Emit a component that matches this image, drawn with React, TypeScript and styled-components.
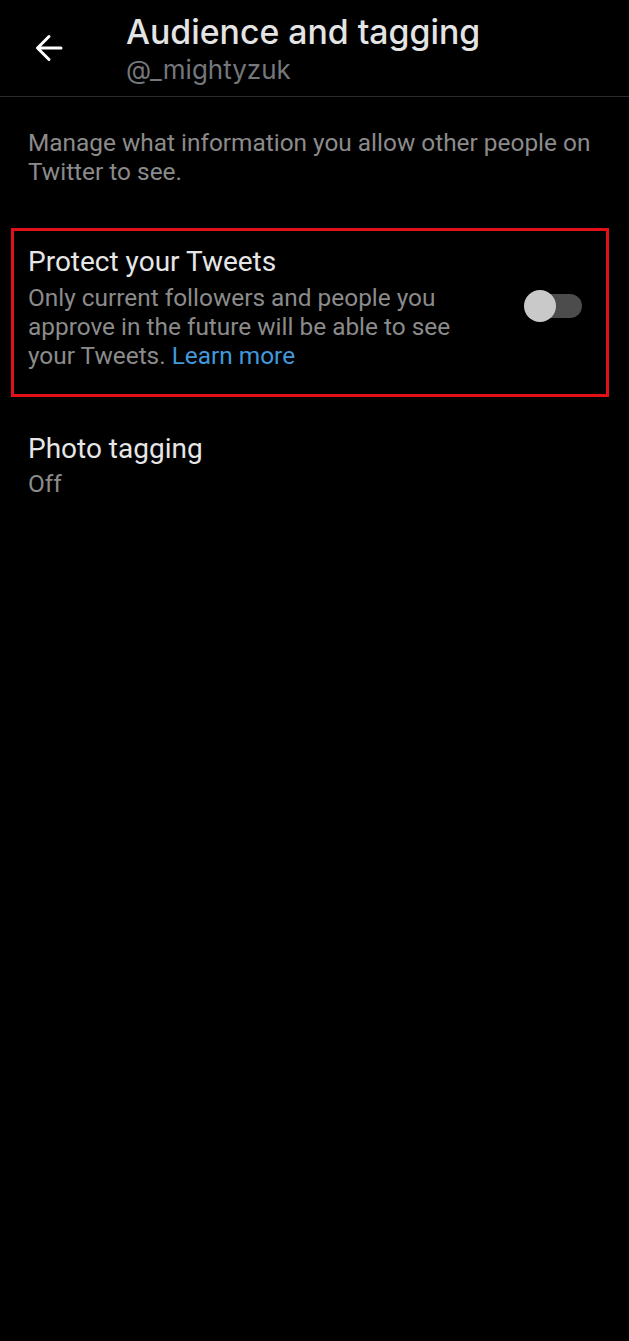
import styled, { createGlobalStyle } from "styled-components";

const GlobalStyle = createGlobalStyle`
  html, body {
    margin: 0;
    padding: 0;
    background: #000;
  }
  body {
    font-family: Roboto, "Noto Sans", sans-serif;
    -webkit-font-smoothing: antialiased;
  }
`;

const Page = styled.div`
  width: 629px;
  min-height: 1341px;
  background: #000;
  color: #e7e9ea;
`;

const Header = styled.header`
  display: flex;
  align-items: flex-start;
  height: 97px;
  border-bottom: 1px solid #2a2c2e;
  box-sizing: border-box;
`;

const BackButton = styled.button`
  display: flex;
  align-items: center;
  justify-content: center;
  width: 98px;
  height: 96px;
  padding: 0;
  background: none;
  border: none;
  color: #fff;
  flex-shrink: 0;
`;

const HeaderText = styled.div`
  display: flex;
  flex-direction: column;
  margin-left: 28px;
  padding-top: 12px;
`;

const Title = styled.h1`
  margin: 0;
  font-family: Inter, "Open Sans", sans-serif;
  font-weight: 500;
  font-size: 33.8px;
  line-height: 40px;
  color: #e4e4e4;
`;

const Handle = styled.div`
  margin-top: 3px;
  font-family: Inter, "Open Sans", sans-serif;
  font-size: 26px;
  line-height: 30px;
  color: #74777b;
`;

const Intro = styled.p`
  margin: 0;
  padding: 31px 28px 0;
  font-size: 24.4px;
  line-height: 29px;
  color: #8b8b8b;
`;

const Highlight = styled.section`
  margin: 42px 20px 0 11px;
  border: 3px solid #e3101a;
  padding: 13px 24px 24px 14px;
  display: flex;
  align-items: center;
  gap: 20px;
`;

const SettingBody = styled.div`
  flex: 1;
  display: flex;
  flex-direction: column;
`;

const SettingTitle = styled.div`
  font-size: 28px;
  line-height: 36px;
  color: #e6e6e6;
`;

const SettingText = styled.div<{ $narrow?: boolean }>`
  margin-top: 2.5px;
  font-size: 24.4px;
  line-height: 29px;
  color: #8b8b8b;
  max-width: ${({ $narrow }) => ($narrow ? "440px" : "none")};
`;

const Link = styled.a`
  color: #4298dc;
  text-decoration: none;
`;

const Toggle = styled.div`
  position: relative;
  width: 58px;
  height: 34px;
  flex-shrink: 0;
  margin-top: -2px;
`;

const Track = styled.div`
  position: absolute;
  left: 15px;
  right: 0;
  top: 5px;
  height: 24px;
  border-radius: 12px;
  background: #4c4c4c;
`;

const Thumb = styled.div`
  position: absolute;
  left: 0;
  top: 1px;
  width: 32px;
  height: 32px;
  border-radius: 50%;
  background: #c9c9c9;
`;

const Row = styled.div`
  padding: 34px 28px 20px;
  display: flex;
  flex-direction: column;
`;

export default function App() {
  return (
    <>
      <GlobalStyle />
      <Page>
        <Header>
          <BackButton aria-label="Back">
            <svg width="30" height="30" viewBox="0 0 30 30" fill="none">
              <path
                d="M27 15H4M15 3.5L3.5 15L15 26.5"
                stroke="currentColor"
                strokeWidth="3"
                strokeLinecap="round"
                strokeLinejoin="round"
              />
            </svg>
          </BackButton>
          <HeaderText>
            <Title>Audience and tagging</Title>
            <Handle>@_mightyzuk</Handle>
          </HeaderText>
        </Header>

        <Intro>Manage what information you allow other people on Twitter to see.</Intro>

        <Highlight>
          <SettingBody>
            <SettingTitle>Protect your Tweets</SettingTitle>
            <SettingText $narrow>
              Only current followers and people you approve in the future will be able to see
              your Tweets. <Link href="#">Learn more</Link>
            </SettingText>
          </SettingBody>
          <Toggle>
            <Track />
            <Thumb />
          </Toggle>
        </Highlight>

        <Row>
          <SettingTitle>Photo tagging</SettingTitle>
          <SettingText>Off</SettingText>
        </Row>
      </Page>
    </>
  );
}
